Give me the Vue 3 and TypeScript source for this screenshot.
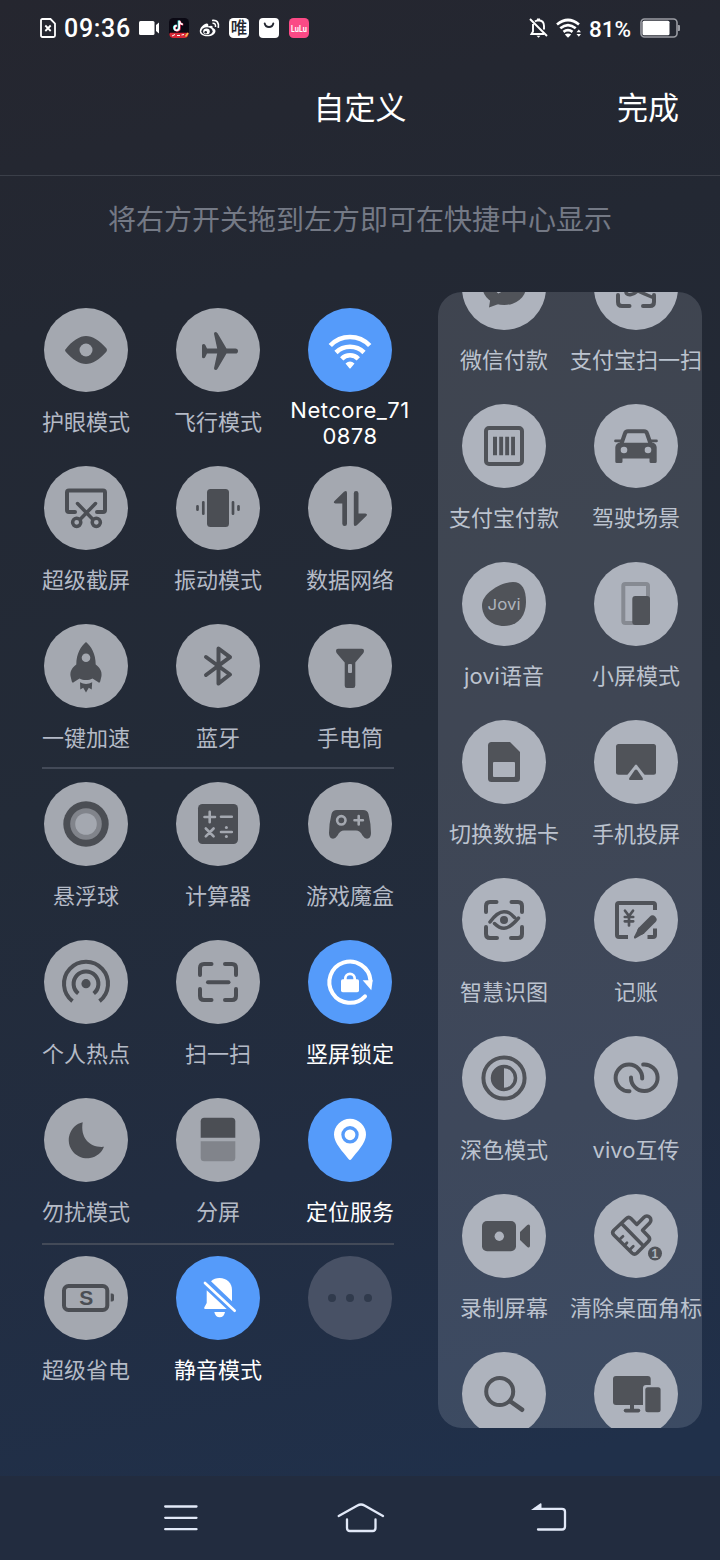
<script setup lang="ts">
interface Tile {
  icon: string
  label: string
  state?: 'on' | 'ghost'
}

const corners =
  '<path class="line" d="M24 35V28q0-4 4-4h7.500M49 24h7q4 0 4 4v7M60 49v7q0 4-4 4h-7M35.500 60H28q-4 0-4-4v-7"/>'

const icons: Record<string, string> = {
  eye: '<path d="M21 42C28 32.500 36 28 42 28S56 32.500 62.500 40.500Q63.500 42 62.500 43.500C56 51.500 48 56 42 56S28 51.500 21.500 43.500Q20.500 42 21.500 40.500Z"/><circle class="hole" cx="42" cy="42" r="6.500"/>',
  plane:
    '<path d="M26 37.500Q26 36 27.500 36Q28.800 36 29.300 37L31 40.500H41.200L38 25.800Q38 24 39.500 24Q41 24 41.700 25.500L50.500 40.500H59.300Q62 40.500 62 43T59.300 45.600H50.500L41.700 60.500Q41 62 39.500 62Q38 62 38 60.200L41.200 45.600H31L29.300 49Q28.800 50.200 27.500 50.200Q26 50.200 26 48.700Z"/>',
  wifi: '<g class="line flat wide"><path d="M22.300 37.500A27 27 0 0 1 61.700 37.500"/><path d="M28 44.500A20 20 0 0 1 56 44.500"/><path d="M33.700 50.800A11.600 11.600 0 0 1 50.300 50.800"/></g><path d="M37.500 55.500Q42 51.500 46.500 55.500L42.800 60Q42 61 41.200 60Z"/>',
  snip: '<path class="line" d="M31 46h-6q-2 0-2-2V26.500q0-2 2-2h34q2 0 2 2V44q0 2-2 2h-6"/><path class="line mid" d="M33.500 37.500L48.500 53M51.500 37.500L36.500 53"/><circle class="line mid" cx="32.700" cy="56.300" r="4.100"/><circle class="line mid" cx="52.300" cy="56.300" r="4.100"/>',
  vibrate:
    '<rect x="31" y="23" width="22" height="38" rx="3.500"/><path class="line thin" d="M27.300 36.300V47.700M57 36.300V47.700M21.500 40.300V43.700M62.500 40.300V43.700"/>',
  data: '<path d="M39 27V57.700Q39 60 36.700 60T34.300 57.700V37.500H27.500Q24.700 37 26.500 35L36 25.800Q39 23.800 39 27Z"/><path transform="rotate(180 42.400 42.500)" d="M39 27V57.700Q39 60 36.700 60T34.300 57.700V37.500H27.500Q24.700 37 26.500 35L36 25.800Q39 23.800 39 27Z"/>',
  rocket:
    '<path d="M42 18C37 22 32.300 30 32.300 40.500C28 44 26 47 26.500 52L27.800 57.500Q28.500 59.500 30 58L35.500 54.500C38 55.700 39 56 42 56S46 55.700 48.500 54.500L54 58Q55.500 59.500 56.200 57.500L57.500 52C58 47 56 44 51.700 40.500C51.700 30 47 22 42 18Z"/><circle class="hole" cx="42" cy="33.700" r="4.300"/><path d="M36 58.300Q42 61.500 48.200 58.300L47.700 65.500L44.800 63.800L42 68.500L39.200 63.800L36.300 65.500Z"/>',
  bluetooth: '<path class="line" d="M30 33L54 50.500L42.500 59.500V24.500L54 33.200L30 51"/>',
  torch:
    '<path d="M30 24.700H54Q56 24.700 56 26.700Q56 28.500 55 29.500L47.300 38.500V61.500Q47.300 64 45 64H39Q36.700 64 36.700 61.500V38.500L29 29.500Q28 28.500 28 26.700Q28 24.700 30 24.700Z"/><rect class="hole" x="40" y="40" width="4" height="9" rx="1"/>',
  ball: '<circle cx="42" cy="42" r="22.700"/><circle class="soft" cx="42" cy="42" r="15.800"/><circle class="hole" cx="42" cy="42" r="10.800"/>',
  calc: '<rect x="22" y="22" width="40" height="40" rx="4.500"/><path class="cut" d="M28.500 35H39M33.700 29.800V40.300M45 34.800H55.800M29.800 46.500L37.600 54.300M37.600 46.500L29.800 54.300M45 50H55.800"/><circle class="hole" cx="50.400" cy="45.500" r="1.500"/><circle class="hole" cx="50.400" cy="54.500" r="1.500"/>',
  game: '<path d="M29 28H55Q59.500 28 60.500 32Q63 42 63 51Q63 56.700 59 56.700Q56.500 56.700 54.500 53.500Q52 48.500 48 48.500H36Q32 48.500 29.500 53.500Q27.500 56.700 25 56.700Q21 56.700 21 51Q21 42 23.500 32Q24.500 28 29 28Z"/><circle class="cut" cx="33.300" cy="38.300" r="4.200"/><path class="cut" d="M46.500 38.300H54.900M50.700 34.100V42.500"/>',
  hotspot:
    '<circle cx="42" cy="43.700" r="4.600"/><path class="line flat" d="M34.300 53.500A12.400 12.400 0 1 1 49.700 53.500M28.500 61.200A22 22 0 1 1 55.500 61.200"/>',
  scan: corners + '<path class="line" d="M32 42.200H52.500"/>',
  lock: '<path class="line" d="M57 56.300A20.600 20.600 0 1 1 62.500 40.500"/><path d="M54.700 40.300H64.700L63.300 50.300Z"/><rect x="33" y="39.300" width="18" height="13" rx="1.800"/><path class="line thin" d="M37.300 40V38.500a4.700 4.700 0 0 1 9.400 0V40"/>',
  moon: '<path d="M38.700 24.200A18.300 18.300 0 1 0 60 48.800C46 50 36 40 38.700 24.200Z"/>',
  split:
    '<path d="M24.700 39.800V23.300q0-3.500 3.500-3.500H55.800q3.500 0 3.500 3.500V39.800Z"/><path class="soft" d="M24.700 43.200H59.300V59.700q0 3.500-3.500 3.500H28.200q-3.500 0-3.500-3.500Z"/>',
  pin: '<path d="M42 20.800A16 16 0 0 1 58 36.800C58 45 49 54 43.500 61Q42 62.800 40.500 61C35 54 26 45 26 36.800A16 16 0 0 1 42 20.800Z"/><circle class="hole" cx="42" cy="36.800" r="8.700"/><circle cx="42" cy="36.800" r="5.400"/>',
  battery:
    '<rect class="line" x="20" y="30" width="43.300" height="24" rx="4.500"/><path d="M66.700 37.500h1.300q2 0 2 2v4q0 2-2 2h-1.300Z"/><text class="glyph" x="42.200" y="49.300" font-size="21">S</text>',
  mute: '<path d="M35 25.300Q38.500 22 43.500 22C51 22 56 27 56 34V45.300Z"/><path d="M30.700 34.300L50.700 53H29Q27.300 52.500 28.500 51L30.700 47Z"/><path d="M38.300 56H49Q48 61.300 43.700 61.300T38.300 56Z"/><path class="line thin" d="M29 27L58.700 54.700"/>',
  more: '<circle cx="24" cy="42" r="4"/><circle cx="42" cy="42" r="4"/><circle cx="60" cy="42" r="4"/>',
  wechat:
    '<ellipse cx="42.300" cy="41" rx="21.700" ry="18"/><path d="M28.500 52L27 61.500L38 57.500Z"/><path class="cut" d="M33.500 43L36.500 46L54 37"/>',
  alipay:
    corners +
    '<path class="line mid" d="M32 43.500q-1 6 5 5q6-1 12-10"/><path class="line mid" d="M40 43q8 4 19 8.500"/>',
  barcode:
    '<rect class="line" x="24" y="24" width="36" height="36" rx="3"/><path d="M31 32.700h4v18.600h-4ZM37.200 32.700h3.900v18.600h-3.900ZM43.200 32.700h3.900v18.600h-3.900ZM49.100 32.700h3.900v18.600h-3.900Z"/>',
  car: '<path class="line" d="M27.500 39.500L30.800 30Q31.500 27.300 34 27.300H50Q52.500 27.300 53.200 30L56.500 39.500"/><path class="line thin" d="M21.500 36.900H27M57 36.900H62.500"/><path d="M24.500 38.700H59.500Q62.700 40.500 62.700 43.500V57.500Q62.700 59 61.200 59H57Q55.500 59 55.500 57.500V54.500H28.500V57.500Q28.500 59 27 59H22.800Q21.300 59 21.300 57.500V43.500Q21.300 40.500 24.500 38.700Z"/><circle class="hole" cx="30" cy="46" r="3.300"/><circle class="hole" cx="54" cy="46" r="3.300"/>',
  jovi: '<path d="M51 20C60 20 64 27 64 40C64 55 55 64 42 64C29 64 20 55 20 43C20 32 38 20 51 20Z"/><text class="glyph word" x="42" y="48" font-size="15" textLength="33" lengthAdjust="spacingAndGlyphs">Jovi</text>',
  mini: '<rect class="line softline" x="29.300" y="22" width="24.700" height="39" rx="2"/><rect x="38.300" y="34" width="17.700" height="29" rx="3"/>',
  sim: '<path d="M29.500 22H48L58 32V58.500Q58 62 54.500 62H29.500Q26 62 26 58.500V25.500Q26 22 29.500 22Z"/><rect class="hole" x="31" y="42" width="22" height="15" rx="1"/>',
  cast: '<rect x="22" y="24" width="40" height="30.700" rx="2.500"/><path class="hole" d="M41 45.200Q42 44 43 45.200L51.500 56H32.500Z"/><path d="M40.800 50Q42 48.800 43.200 50L48.700 58Q49.500 60 47.500 60H36.500Q34.500 60 35.300 58Z"/>',
  vision:
    '<path class="line" d="M24 34V28q0-4 4-4h6.500M49.500 24H56q4 0 4 4v6M60 49v7q0 4-4 4h-7M35 60H28q-4 0-4-4v-7"/><path class="line mid" d="M28 44C33 37 37 33.700 42 33.700S49 36 52.500 39.500M32.500 45.500C36 49 38.500 50.200 42 50.200S51 46.500 56.500 40"/><circle cx="42" cy="42" r="4"/>',
  ledger:
    '<path class="line flat" d="M61 32V27q0-2-2-2H25q-2 0-2 2V57q0 2 2 2H34M53.500 59H59q2 0 2-2V50.500"/><path class="line thin" d="M31 32.700L35 38L39 32.700M35 38.500V47.500M30.800 39H39.200M30.800 43.300H39.200"/><path class="line nib" d="M58.500 41.500L47.500 52.500"/><path d="M44.800 49.600L50.300 55.200L41.500 60.500Q39.500 61 40 58.700Z"/>',
  dark: '<circle class="line" cx="42" cy="42" r="20.600"/><circle class="line mid" cx="42" cy="42" r="11.500"/><path d="M42 30V54A12 12 0 0 1 42 30Z"/>',
  share:
    '<path class="line" d="M35.500 55.200A13.300 13.300 0 1 1 48.200 42.500M37 41.500A13.300 13.300 0 1 0 49.200 28.500"/>',
  record:
    '<rect x="20" y="27" width="34" height="30.300" rx="5"/><circle class="hole" cx="37.300" cy="42.200" r="4.700"/><path d="M58 38L65.300 31Q68 29.700 68 32.500V51.500Q68 54.500 65.300 53L58 46Z"/>',
  brush:
    '<path class="line mid" d="M37 24.500L42.800 30.500L50 23.300a4 4 0 0 1 5.700 5.700L48.500 36.300L54.500 42.500Q56.700 45 54.500 47.300L43 59Q40.500 61.300 38 59L19.800 41Q17.500 38.700 19.800 36.300L32.300 24.500Q34.700 22.300 37 24.500ZM28 30L49.500 52"/><path class="line thin" d="M25 46L29 42.300M30.700 51.200L33 48.800M35.500 56L39.300 52.300"/><circle cx="61" cy="59.500" r="7"/><text class="glyph cutout" x="60.800" y="63.700" font-size="12">1</text>',
  search: '<circle class="line" cx="37.700" cy="39.500" r="13.500"/><path class="line wide" d="M48.500 49.500L60 57.700"/>',
  devices:
    '<rect x="19" y="24" width="37.700" height="29" rx="3"/><path d="M36 52H40V57H36Z"/><rect x="29.700" y="56.700" width="16.600" height="3.700" rx="1.800"/><rect class="hole" x="49" y="33" width="20" height="30" rx="3"/><rect x="51.300" y="35.300" width="15.300" height="25" rx="2.500"/>',
}

const groups: Tile[][] = [
  [
    { icon: 'eye', label: '护眼模式' },
    { icon: 'plane', label: '飞行模式' },
    { icon: 'wifi', label: 'Netcore_710878', state: 'on' },
    { icon: 'snip', label: '超级截屏' },
    { icon: 'vibrate', label: '振动模式' },
    { icon: 'data', label: '数据网络' },
    { icon: 'rocket', label: '一键加速' },
    { icon: 'bluetooth', label: '蓝牙' },
    { icon: 'torch', label: '手电筒' },
  ],
  [
    { icon: 'ball', label: '悬浮球' },
    { icon: 'calc', label: '计算器' },
    { icon: 'game', label: '游戏魔盒' },
    { icon: 'hotspot', label: '个人热点' },
    { icon: 'scan', label: '扫一扫' },
    { icon: 'lock', label: '竖屏锁定', state: 'on' },
    { icon: 'moon', label: '勿扰模式' },
    { icon: 'split', label: '分屏' },
    { icon: 'pin', label: '定位服务', state: 'on' },
  ],
  [
    { icon: 'battery', label: '超级省电' },
    { icon: 'mute', label: '静音模式', state: 'on' },
    { icon: 'more', label: '', state: 'ghost' },
  ],
]

const available: Tile[] = [
  { icon: 'wechat', label: '微信付款' },
  { icon: 'alipay', label: '支付宝扫一扫' },
  { icon: 'barcode', label: '支付宝付款' },
  { icon: 'car', label: '驾驶场景' },
  { icon: 'jovi', label: 'jovi语音' },
  { icon: 'mini', label: '小屏模式' },
  { icon: 'sim', label: '切换数据卡' },
  { icon: 'cast', label: '手机投屏' },
  { icon: 'vision', label: '智慧识图' },
  { icon: 'ledger', label: '记账' },
  { icon: 'dark', label: '深色模式' },
  { icon: 'share', label: 'vivo互传' },
  { icon: 'record', label: '录制屏幕' },
  { icon: 'brush', label: '清除桌面角标' },
  { icon: 'search', label: '' },
  { icon: 'devices', label: '' },
]
</script>

<template>
  <div class="screen">
    <div class="status">
      <div class="status-left">
        <svg class="sim" width="16" height="20" viewBox="0 0 16 20" fill="none" stroke="#fff" stroke-width="1.800">
          <path d="M2.500 1H10.500L15 5.500V17.500Q15 19 13.500 19H2.500Q1 19 1 17.500V2.500Q1 1 2.500 1Z" />
          <path d="M5.300 7.500L10.700 13M10.700 7.500L5.300 13" />
        </svg>
        <span class="time">09:36</span>
        <svg class="camera" width="21" height="20" viewBox="0 0 21 20" fill="#fff">
          <rect x="0" y="3" width="15.500" height="14" rx="1.500" />
          <path d="M17 7L20 4.500V15.500L17 13Z" />
        </svg>
        <div class="apps">
          <svg width="20" height="20" viewBox="0 0 20 20">
            <rect width="20" height="20" rx="4.500" fill="#0b0914" />
            <path d="M1 14.800H19.700V16Q19 20 15.500 20H4.500Q.500 20 .300 16Z" fill="#d92838" />
            <path d="M3 18L6 16.500M8 17.500H11M12.500 17L15 16.500" stroke="#fff" stroke-width="1" />
            <path d="M16.500 18.500L19 15" stroke="#f5c04b" stroke-width="1.500" />
            <g fill="none" stroke-width="1.700">
              <path d="M9.500 2.500V9.500A2.400 2.400 0 1 1 7.300 7.300M9.500 2.500Q10 5.500 13 6" stroke="#25e8e4" />
              <path d="M10.800 3V10.300A2.400 2.400 0 1 1 8.300 8M10.800 3Q11.300 6.200 14.300 6.700" stroke="#f52a56" />
              <path d="M10.200 2.700V10A2.400 2.400 0 1 1 7.800 7.600M10.200 2.700Q10.700 6 13.800 6.300" stroke="#fff" />
            </g>
          </svg>
          <svg width="21" height="20" viewBox="0 0 21 20" fill="none" stroke="#fff">
            <path
              d="M7.500 5.500C3.500 6.500 .800 10.500 .800 13.300C.800 16.500 4.500 18.300 8.300 18.300C13 18.300 16.500 15.800 16.500 12.900C16.500 11 14.800 10.200 13.600 9.900C14 8.300 13.500 7 9.200 8.300C9.700 6.500 9 5.300 7.500 5.500Z"
              fill="#fff"
              stroke="none"
            />
            <ellipse cx="8" cy="13.200" rx="5.600" ry="3.900" fill="#242731" stroke="none" />
            <ellipse cx="7.500" cy="13.400" rx="3.300" ry="2.900" fill="#fff" stroke="none" />
            <circle cx="6.700" cy="14.200" r="1.300" fill="#242731" stroke="none" />
            <path d="M13.500 5.300Q17 5 16.500 9" stroke-width="1.500" />
            <path d="M13 2.500Q20.500 1.500 19.300 9.800" stroke-width="1.700" />
          </svg>
          <svg width="20" height="20" viewBox="0 0 20 20">
            <rect width="20" height="20" rx="4.500" fill="#fff" />
            <text class="wei" x="10" y="16" font-size="16.500">唯</text>
          </svg>
          <svg width="20" height="20" viewBox="0 0 20 20">
            <rect width="20" height="20" rx="4" fill="#fff" />
            <path d="M5.700 5.500A4.400 4.400 0 0 0 14.300 5.500" fill="none" stroke="#242731" stroke-width="1.900" stroke-linecap="round" />
          </svg>
          <svg width="20" height="20" viewBox="0 0 20 20">
            <rect width="20" height="20" rx="4.500" fill="#fb4a86" />
            <text class="lulu" x="10" y="13.500" font-size="9" textLength="16" lengthAdjust="spacingAndGlyphs">LuLu</text>
          </svg>
        </div>
      </div>
      <div class="status-right">
        <svg width="19" height="20" viewBox="0 0 19 20" fill="none" stroke="#fff" stroke-width="1.900">
          <path d="M4 6V13.500L2.500 16H15" />
          <path d="M6 3.500Q7.500 2.200 9.500 2.200Q15 2.500 15 8V11.500" />
          <path d="M1 1L18 18M8 1.500H11" />
          <path d="M7.500 17.800H11.500L9.500 19.800Z" fill="#fff" stroke="none" />
        </svg>
        <svg class="wifi" width="26" height="20" viewBox="0 0 26 20" fill="none" stroke="#fff" stroke-width="2.700">
          <path d="M1 6.500Q12 -2.500 23 6.500" />
          <path d="M4.300 10.300Q12 4 19.700 10.300" />
          <path d="M7.500 13.900Q12 10.400 16.500 13.900" />
          <path d="M8.800 16.500Q12 14.500 15.200 16.500L12 19.800Z" fill="#fff" stroke="none" />
          <path d="M20.500 14.200L22.800 11.500L25 14.200ZM20.500 16L22.800 18.800L25 16Z" fill="#fff" stroke="none" />
        </svg>
        <span class="percent">81%</span>
        <svg width="40" height="20" viewBox="0 0 40 20">
          <rect x="1" y="1" width="36" height="18" rx="3.500" fill="none" stroke="#9a9ca3" stroke-width="1.600" />
          <rect x="2.500" y="2.700" width="27" height="14.600" rx="1.500" fill="#fff" />
          <path d="M38 7H39Q40 7 40 8V12Q40 13 39 13H38Z" fill="#9a9ca3" />
        </svg>
      </div>
    </div>

    <header class="header">
      <h1>自定义</h1>
      <button type="button">完成</button>
    </header>

    <p class="hint">将右方开关拖到左方即可在快捷中心显示</p>

    <main class="content">
      <div class="active">
        <section v-for="(group, g) in groups" :key="g" class="grid group">
          <div v-for="tile in group" :key="tile.icon" class="tile" :class="tile.state">
            <svg class="disc" viewBox="0 0 84 84" v-html="icons[tile.icon]" />
            <span class="label" :class="{ network: tile.icon === 'wifi' }">{{ tile.label }}</span>
          </div>
        </section>
      </div>

      <aside class="panel">
        <div class="grid">
          <div v-for="tile in available" :key="tile.icon" class="tile">
            <svg class="disc" viewBox="0 0 84 84" v-html="icons[tile.icon]" />
            <span class="label">{{ tile.label }}</span>
          </div>
        </div>
      </aside>
    </main>

    <nav class="nav">
      <svg width="34" height="30" viewBox="0 0 34 30" fill="none" stroke="#e2e9f8" stroke-width="2.300" stroke-linecap="round">
        <path d="M1.200 3.500H32.500M1.200 14.800H32.500M1.200 26.200H32.500" />
      </svg>
      <svg class="home" width="48" height="30" viewBox="0 0 48 30" fill="none" stroke="#e2e9f8" stroke-width="2.300" stroke-linecap="round" stroke-linejoin="round">
        <path d="M1.700 13L20.500 2.500Q24 .500 27.500 2.500L46 13" />
        <path d="M10 16.500V25Q10 28 13 28H35.500Q38.500 28 38.500 25V16.500" />
      </svg>
      <svg width="36" height="30" viewBox="0 0 36 30" fill="none" stroke="#e2e9f8" stroke-width="2.300" stroke-linecap="round">
        <path d="M4 5.800H31Q34 5.800 34 8.800V23.500Q34 26.500 31 26.500H7" />
        <path d="M0 7L9.500 .300Q10.500 0 10.500 1.200V5.500H4V7Z" fill="#e2e9f8" stroke="none" />
      </svg>
    </nav>
  </div>
</template>

<style>
body {
  margin: 0;
  background: #232a38;
}
</style>

<style scoped>
.screen {
  display: flex;
  flex-direction: column;
  width: 720px;
  height: 1560px;
  overflow: hidden;
  background: linear-gradient(168deg, #25262f 0%, #232833 20%, #232b38 48%, #222d41 72%, #20304a 92%);
  color: #fff;
  font-family: Inter, 'Noto Sans CJK SC', sans-serif;
}

.status {
  display: flex;
  justify-content: space-between;
  align-items: center;
  box-sizing: border-box;
  height: 56px;
  padding: 0 40px;
}

.status svg {
  display: block;
  flex: none;
  overflow: visible;
}

.status-left,
.status-right,
.apps {
  display: flex;
  align-items: center;
}

.time {
  width: 66px;
  margin: 2px 9px 0 8px;
  font-family: Roboto, sans-serif;
  font-size: 25px;
  font-weight: 500;
  line-height: 30px;
  letter-spacing: 0.7px;
  white-space: nowrap;
}

.apps {
  gap: 10px;
  margin-left: 9px;
}

.apps svg:nth-child(2) {
  margin-right: -1px;
}

.wei {
  fill: #242731;
  font-family: 'Noto Sans CJK SC', sans-serif;
  font-weight: 500;
  text-anchor: middle;
}

.lulu {
  fill: #fff;
  font-weight: 700;
  text-anchor: middle;
}

.wifi {
  margin-left: 8px;
}

.percent {
  width: 42px;
  margin: 1px 9px 0 7px;
  font-family: Roboto, sans-serif;
  font-size: 22.5px;
  font-weight: 500;
  line-height: 28px;
  white-space: nowrap;
}

.header {
  display: grid;
  grid-template-columns: 1fr auto 1fr;
  align-items: center;
  box-sizing: border-box;
  height: 120px;
  padding: 0 40px 20px;
  border-bottom: 1px solid #3b3f49;
}

.header h1,
.header button {
  margin: 0;
  padding: 0;
  border: 0;
  background: none;
  color: #fff;
  font: 400 31px/40px 'Noto Sans CJK SC', sans-serif;
}

.header h1 {
  grid-column: 2;
}

.header button {
  justify-self: end;
  margin-right: 1px;
}

.hint {
  margin: 22px 0 0;
  color: #747985;
  font: 400 28px/40px 'Noto Sans CJK SC', sans-serif;
  text-align: center;
}

.content {
  display: flex;
  flex: 1;
  align-items: flex-start;
  gap: 22px;
  padding: 54px 18px 0 20px;
}

.active {
  padding-top: 16px;
}

.group + .group {
  position: relative;
}

.group + .group::before {
  position: absolute;
  top: -15px;
  left: 22px;
  width: 352px;
  height: 2px;
  background: #434a58;
  content: '';
}

.group:last-child::before {
  top: -13px;
}

.grid {
  display: grid;
  grid-template-columns: repeat(auto-fill, 132px);
  grid-auto-rows: 158px;
}

.active .grid {
  width: 396px;
}

.tile {
  --disc: #a4a8b0;
  --soft: #81848b;
  display: flex;
  flex-direction: column;
  align-items: center;
  color: #4b4e54;
}

.disc {
  flex: none;
  width: 84px;
  height: 84px;
  border-radius: 50%;
  background: var(--disc);
  fill: currentColor;
}

.label {
  margin-top: 15px;
  color: #b4bac6;
  font-size: 22px;
  line-height: 30px;
  white-space: nowrap;
}

.label.network {
  width: 126px;
  margin-top: 5px;
  font-size: 22px;
  letter-spacing: 0.5px;
  line-height: 26px;
  text-align: center;
  white-space: normal;
  word-break: break-all;
}

.on {
  --disc: #559bfa;
  color: #fff;
}

.on .label {
  color: #fff;
}

.ghost {
  --disc: #485165;
  color: #303a4c;
}

.disc :deep(.line) {
  fill: none;
  stroke: currentColor;
  stroke-width: 4;
  stroke-linecap: round;
  stroke-linejoin: round;
}

.disc :deep(.flat) {
  stroke-linecap: butt;
}

.disc :deep(.wide) {
  stroke-width: 4.600;
}

.disc :deep(.mid) {
  stroke-width: 3.500;
}

.disc :deep(.thin) {
  stroke-width: 2.700;
}

.disc :deep(.nib) {
  stroke-width: 8;
}

.disc :deep(.softline) {
  stroke: var(--soft);
}

.disc :deep(.soft) {
  fill: var(--soft);
}

.disc :deep(.hole) {
  fill: var(--disc);
}

.disc :deep(.cut) {
  fill: none;
  stroke: var(--disc);
  stroke-width: 2.600;
  stroke-linecap: round;
}

.disc :deep(.glyph) {
  font-family: 'Liberation Sans', sans-serif;
  font-weight: 700;
  text-anchor: middle;
}

.disc :deep(.word) {
  fill: var(--disc);
  font-family: Inter, sans-serif;
  font-weight: 400;
}

.disc :deep(.cutout) {
  fill: var(--disc);
}

.panel {
  width: 264px;
  height: 1136px;
  overflow: hidden;
  border-radius: 24px;
  background: rgba(232, 244, 255, 0.14);
}

.panel .grid {
  margin-top: -46px;
}

.panel .tile {
  --disc: #aeb3bd;
  --soft: #868a92;
  color: #505359;
}

.panel .label {
  color: #bcc3cf;
}

.nav {
  display: flex;
  flex: none;
  align-items: center;
  justify-content: space-between;
  box-sizing: border-box;
  height: 84px;
  padding: 0 153px 0 164px;
  background: #222c3f;
}

.home {
  margin-right: 8px;
}
</style>
